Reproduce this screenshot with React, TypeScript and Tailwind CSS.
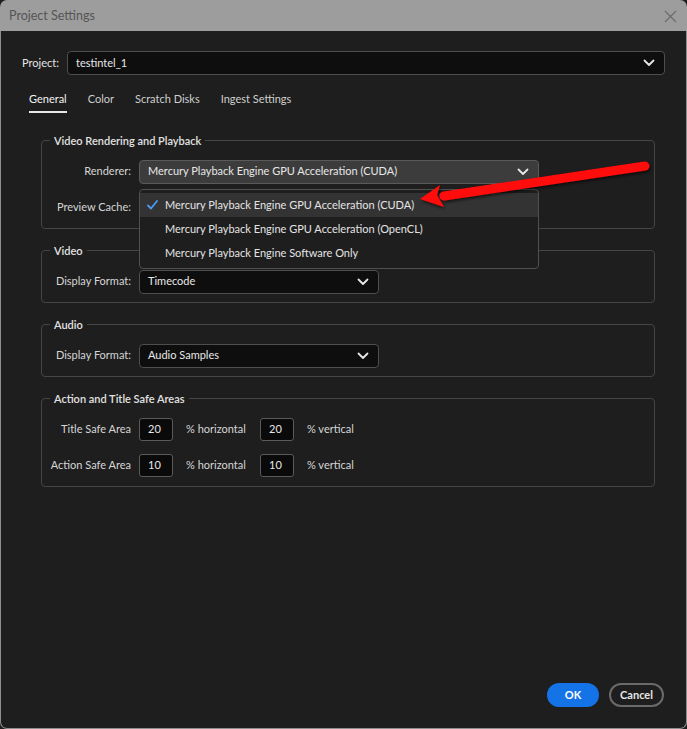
import React from "react";

const Chevron = () => (
  <svg width="12" height="8" viewBox="0 0 12 8" fill="none">
    <path d="M1.5 1.5 L6 6 L10.5 1.5" stroke="#e6e6e6" strokeWidth="1.8" strokeLinecap="round" strokeLinejoin="round" />
  </svg>
);

function Select({ value, className, bg = "bg-[#0e0e0e]" }: { value: string; className: string; bg?: string }) {
  return (
    <div className={`flex items-center justify-between rounded-[4px] border border-[#4e4e4e] pl-[8px] pr-[9px] text-[11px] text-[#e8e8e8] ${bg} ${className}`}>
      <span>{value}</span>
      <Chevron />
    </div>
  );
}

function Group({ title, children, className = "" }: { title: string; children: React.ReactNode; className?: string }) {
  return (
    <fieldset className={`rounded-[4px] border border-[#454545] ${className}`}>
      <legend className="ml-[8px] px-[4px] text-[11px] font-semibold leading-[16px] text-[#e2e2e2]">{title}</legend>
      {children}
    </fieldset>
  );
}

function Label({ children }: { children: React.ReactNode }) {
  return <div className="w-[89px] shrink-0 text-right text-[11px] text-[#d6d6d6]">{children}</div>;
}

function NumBox({ v }: { v: string }) {
  return (
    <div className="flex h-[23px] w-[34px] items-center rounded-[3px] border border-[#5a5a5a] bg-[#0a0a0a] pl-[8px] text-[11px] text-[#e8e8e8]">{v}</div>
  );
}

export default function App() {
  return (
    <div className="relative flex h-[729px] w-[687px] flex-col overflow-hidden bg-[#1e1e1e]" style={{ fontFamily: "Lato, 'Liberation Sans', sans-serif" }}>
      {/* title bar */}
      <div className="flex h-[31px] shrink-0 items-center justify-between rounded-t-[7px] bg-[#9d9d9d] pl-[9px] pr-[10px] pt-[2px]">
        <span className="text-[12.5px] text-[#555555]">Project Settings</span>
        <svg width="13" height="13" viewBox="0 0 13 13">
          <path d="M1 1 L12 12 M12 1 L1 12" stroke="#6b6b6b" strokeWidth="1.2" />
        </svg>
      </div>
      <div className="flex flex-1 flex-col rounded-b-[7px] border-x border-b border-[#8e8e8e] bg-[#1e1e1e]">
        {/* project row */}
        <div className="mt-[20px] flex items-center pl-[21px] pr-[21px]">
          <span className="w-[45px] text-[11px] text-[#e4e4e4]">Project:</span>
          <Select value="testintel_1" className="h-[24px] flex-1" />
        </div>
        {/* tabs */}
        <div className="mt-[16px] flex gap-[21px] pl-[28px] text-[11px] text-[#cfcfcf]">
          <div className="flex flex-col items-center">
            <span className="text-[#f2f2f2]">General</span>
            <div className="mt-[3px] h-[2px] w-full bg-[#e8e8e8]" />
          </div>
          <span>Color</span>
          <span>Scratch Disks</span>
          <span>Ingest Settings</span>
        </div>
        {/* groups */}
        <div className="mt-[20px] flex flex-col gap-[14px] pl-[40px] pr-[31px]">
          <Group title="Video Rendering and Playback" className="pb-[8px]">
            <div className="mt-[11px] flex items-center gap-[8px]">
              <Label>Renderer:</Label>
              <Select value="Mercury Playback Engine GPU Acceleration (CUDA)" bg="bg-[#3c3c3c]" className="h-[24px] w-[400px] border-[#5a5a5a]" />
            </div>
            <div className="mt-[12px] flex items-center gap-[8px]">
              <Label>Preview Cache:</Label>
              <Select value="" className="h-[24px] w-[400px]" />
            </div>
          </Group>
          <Group title="Video" className="pb-[8px]">
            <div className="mt-[11px] flex items-center gap-[8px]">
              <Label>Display Format:</Label>
              <Select value="Timecode" className="h-[24px] w-[240px]" />
            </div>
          </Group>
          <Group title="Audio" className="pb-[8px]">
            <div className="mt-[11px] flex items-center gap-[8px]">
              <Label>Display Format:</Label>
              <Select value="Audio Samples" className="h-[24px] w-[240px]" />
            </div>
          </Group>
          <Group title="Action and Title Safe Areas" className="pb-[9px]">
            <div className="mt-[11px] flex items-center gap-[8px]">
              <Label>Title Safe Area</Label>
              <NumBox v="20" />
              <span className="ml-[5px] w-[66px] text-[11px] text-[#d6d6d6]">% horizontal</span>
              <NumBox v="20" />
              <span className="ml-[5px] text-[11px] text-[#d6d6d6]">% vertical</span>
            </div>
            <div className="mt-[13px] flex items-center gap-[8px]">
              <Label>Action Safe Area</Label>
              <NumBox v="10" />
              <span className="ml-[5px] w-[66px] text-[11px] text-[#d6d6d6]">% horizontal</span>
              <NumBox v="10" />
              <span className="ml-[5px] text-[11px] text-[#d6d6d6]">% vertical</span>
            </div>
          </Group>
        </div>
        {/* buttons */}
        <div className="mt-auto mb-[21px] flex justify-end gap-[10px] pr-[22px]">
          <button className="h-[24px] w-[52px] rounded-full bg-[#1473e6] text-[11px] font-bold text-white">OK</button>
          <button className="h-[24px] w-[55px] rounded-full border-2 border-[#6a6a6a] text-[11px] font-bold text-[#e6e6e6]">Cancel</button>
        </div>
      </div>

      {/* open dropdown menu */}
      <div className="absolute left-[139px] top-[189px] w-[400px] rounded-[4px] border border-[#505050] bg-[#1e1e1e] py-[3px] text-[11px] text-[#e4e4e4]">
        <div className="flex h-[24px] items-center bg-[#333333]">
          <svg className="ml-[7px] mr-[7px]" width="11" height="10" viewBox="0 0 11 10">
            <path d="M1 5.5 L4 8.5 L10 1" stroke="#4a9bf5" strokeWidth="1.8" fill="none" strokeLinecap="round" strokeLinejoin="round" />
          </svg>
          <span>Mercury Playback Engine GPU Acceleration (CUDA)</span>
        </div>
        <div className="flex h-[24px] items-center pl-[25px]">Mercury Playback Engine GPU Acceleration (OpenCL)</div>
        <div className="flex h-[24px] items-center pl-[25px]">Mercury Playback Engine Software Only</div>
      </div>

      {/* red annotation arrow */}
      <svg className="pointer-events-none absolute left-0 top-0" width="687" height="729" viewBox="0 0 687 729">
        <defs>
          <filter id="sh" x="-10%" y="-50%" width="120%" height="200%">
            <feDropShadow dx="1" dy="2" stdDeviation="1.5" floodColor="#000" floodOpacity="0.6" />
          </filter>
        </defs>
        <g filter="url(#sh)" fill="#ff0a0a">
          <path d="M645 166 L444 196" stroke="#ff0a0a" strokeWidth="9" strokeLinecap="round" />
          <path d="M420 199 L440 185 L437 195 L444 207 Z" />
        </g>
      </svg>
    </div>
  );
}
